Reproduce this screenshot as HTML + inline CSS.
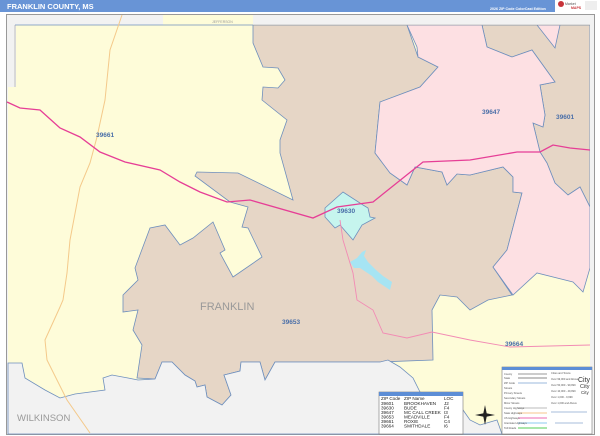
<!DOCTYPE html>
<html><head><meta charset="utf-8"><style>
html,body{margin:0;padding:0;background:#fff;width:600px;height:436px;overflow:hidden}
svg{display:block}
text{font-family:"Liberation Sans",sans-serif}
</style></head><body>
<svg width="600" height="436" viewBox="0 0 600 436" xmlns="http://www.w3.org/2000/svg">
<rect x="0" y="0" width="600" height="12" fill="#6894d6"/>
<text x="7" y="9" font-size="7.5" font-weight="bold" fill="#fff">FRANKLIN COUNTY, MS</text>
<text x="490" y="10" font-size="3.6" font-weight="bold" fill="#fff">2026 ZIP Code ColorCast Edition</text>
<rect x="555" y="0" width="45" height="12" fill="#fff"/>
<circle cx="561" cy="4" r="3" fill="#c8343a"/>
<text x="565" y="5" font-size="3.5" fill="#555">Market</text>
<text x="571" y="9" font-size="3.5" fill="#c8343a" font-weight="bold">MAPS</text>
<rect x="585" y="1" width="12" height="9" fill="#eee"/>
<rect x="6.5" y="14.5" width="588" height="420" fill="#f2f2f2" stroke="#999" stroke-width="1"/>
<rect x="8" y="87" width="582" height="346" fill="#fefcd9"/>
<rect x="16" y="25" width="574" height="62" fill="#fefcd9"/>
<!-- tan -->
<polygon fill="#e6d6c6" stroke="#6e8fbd" stroke-width="0.8" points="253,25 253,43 263,67 278,68 285,80 278,88 263,87 262,100 287,120 280,140 280,153 293,200 238,173 197,172 195,176 230,202 248,207 242,227 248,228 262,257 233,277 220,253 225,250 213,222 193,238 180,245 165,225 150,228 135,268 138,280 123,295 123,312 138,310 133,330 142,345 137,378 155,379 162,362 172,362 185,375 195,381 197,387 205,385 207,397 222,405 231,395 224,375 240,371 241,362 260,362 265,380 275,362 380,362 433,360 432,310 440,295 457,297 470,310 488,300 512,295 493,267 507,250 522,193 513,192 513,177 503,167 470,175 457,174 447,185 442,172 415,167 407,185 390,173 375,153 380,102 420,87 438,67 418,57 407,25"/>
<polygon fill="#e6d6c6" stroke="#6e8fbd" stroke-width="0.8" points="482,25 487,47 512,57 532,50 555,82 540,85 545,115 543,127 533,123 540,152 547,163 555,183 568,195 580,187 590,207 590,25"/>
<!-- pink -->
<polygon fill="#fde0e3" stroke="#6e8fbd" stroke-width="0.8" points="407,25 417,47 418,57 438,67 420,87 380,102 375,153 390,173 407,185 415,167 442,172 447,185 457,174 470,175 503,167 513,177 513,192 522,193 507,250 493,267 513,295 537,273 573,282 583,292 590,268 590,207 580,187 568,195 555,183 547,163 540,152 533,123 543,127 545,115 540,85 555,82 532,50 512,57 487,47 482,25"/>
<polygon fill="#fde0e3" stroke="#6e8fbd" stroke-width="0.8" points="537,25 555,48 560,25"/>
<!-- gray outside bottom -->
<polygon fill="#f2f2f2" stroke="#6e8fbd" stroke-width="0.8" points="8,363 22,363 25,378 45,390 60,398 75,394 105,390 103,378 112,375 128,378 138,380 155,379 162,362 172,362 185,375 195,381 197,387 205,385 207,397 222,405 231,395 224,375 240,371 241,362 260,362 265,380 275,362 380,362 388,360 400,367 413,378 420,392 463,410 470,420 480,425 497,420 502,434 8,434"/>
<rect x="16" y="15" width="147" height="10" fill="#f2f2f2"/>
<rect x="163" y="15" width="90" height="10" fill="#fefcd9"/>
<rect x="253" y="15" width="337" height="10" fill="#f2f2f2"/>
<rect x="8" y="15" width="7" height="72" fill="#f2f2f2"/>
<line x1="15" y1="25" x2="253" y2="25" stroke="#6e8fbd" stroke-width="0.8"/>
<line x1="253" y1="25" x2="590" y2="25" stroke="#999" stroke-width="0.6"/>
<line x1="15" y1="25" x2="15" y2="87" stroke="#999" stroke-width="0.6"/>
<rect x="590" y="15" width="4" height="419" fill="#f2f2f2"/>
<text x="212" y="23" font-size="3.5" fill="#999">JEFFERSON</text>
<polygon fill="#c6f5ee" stroke="#6e8fbd" stroke-width="0.8" points="325,208 343,192 363,205 368,208 370,217 375,218 362,225 353,240 340,225 335,228 325,217"/>
<polygon fill="#a6e4f3" points="350,262 357,258 362,252 366,250 364,256 368,262 376,270 383,276 392,282 390,290 384,286 378,282 372,276 366,272 360,268 354,268"/>
<polyline fill="none" stroke="#f4c98a" stroke-width="1" points="122,15 110,50 105,100 97,137 90,163 80,187 70,240 67,273 63,300 60,307 45,340 47,360 67,400 90,433"/>
<polyline fill="none" stroke="#f28bb4" stroke-width="0.9" points="340,220 343,240 353,273 357,300 373,310 383,333 407,338 432,332 470,340 510,347 590,345"/>
<polyline fill="none" stroke="#e63e96" stroke-width="1.3" points="7,102 20,108 40,110 60,128 80,137 100,152 125,162 160,170 180,182 200,192 227,202 250,200 313,218 337,207 373,202 423,162 470,160 517,152 540,152 553,145 570,148 590,150"/>
<g font-size="6.5" font-weight="bold" fill="#4a6fa8">
<text x="96" y="137">39661</text>
<text x="482" y="114">39647</text>
<text x="556" y="119">39601</text>
<text x="337" y="213">39630</text>
<text x="282" y="324">39653</text>
<text x="505" y="346">39664</text>
</g>
<text x="200" y="310" font-size="11" fill="#999">FRANKLIN</text>
<text x="17" y="421" font-size="9.5" fill="#999">WILKINSON</text>
<g fill="#222"><polygon points="485,405 487,415 485,425 483,415"/><polygon points="475,415 485,413 495,415 485,417"/></g>
<rect x="379" y="392" width="84" height="42" fill="#fff" stroke="#777" stroke-width="0.6"/>
<rect x="379" y="392" width="84" height="4" fill="#5d8ed6"/>
<g font-size="4.6" fill="#222">
<text x="381" y="400">ZIP Code</text><text x="404" y="400">ZIP Name</text><text x="444" y="400">LOC</text>
<text x="381" y="405">39601</text><text x="404" y="405">BROOKHAVEN</text><text x="444" y="405">J2</text>
<text x="381" y="409.5">39630</text><text x="404" y="409.5">BUDE</text><text x="444" y="409.5">F4</text>
<text x="381" y="414">39647</text><text x="404" y="414">MC CALL CREEK</text><text x="444" y="414">I3</text>
<text x="381" y="418.5">39653</text><text x="404" y="418.5">MEADVILLE</text><text x="444" y="418.5">F4</text>
<text x="381" y="423">39661</text><text x="404" y="423">ROXIE</text><text x="444" y="423">C4</text>
<text x="381" y="427.5">39664</text><text x="404" y="427.5">SMITHDALE</text><text x="444" y="427.5">I6</text>
</g>
<rect x="502" y="367" width="90" height="67" fill="#fff" stroke="#777" stroke-width="0.6"/>
<rect x="502" y="367" width="90" height="3" fill="#5d8ed6"/>
<g stroke-width="1">
<line x1="518" y1="374" x2="547" y2="374" stroke="#999"/>
<line x1="518" y1="378" x2="547" y2="378" stroke="#888"/>
<line x1="518" y1="383" x2="547" y2="383" stroke="#9bb8dd"/>
<line x1="518" y1="408" x2="547" y2="408" stroke="#bbb"/>
<line x1="518" y1="413" x2="547" y2="413" stroke="#f7c48c"/>
<line x1="518" y1="418" x2="547" y2="418" stroke="#ee68b0"/>
<line x1="518" y1="423" x2="547" y2="423" stroke="#8cc8ef"/>
<line x1="518" y1="428" x2="547" y2="428" stroke="#55cc55"/>
</g>
<g font-size="2.6" fill="#555">
<text x="504" y="375">County</text><text x="504" y="379">State</text><text x="504" y="384">ZIP Code</text><text x="504" y="389">Streets</text><text x="504" y="394">Primary Streets</text><text x="504" y="399">Secondary Streets</text><text x="504" y="404">Minor Streets</text><text x="504" y="409">County Highways</text><text x="504" y="414">State Highways</text><text x="504" y="419">US Highways</text><text x="504" y="424">Interstate Highways</text><text x="504" y="429">Toll Roads</text>
<text x="551" y="374">Cities and Towns</text><text x="551" y="380">Over 99,000 and Above</text><text x="551" y="386">Over 50,000 - 99,999</text><text x="551" y="392">Over 10,000 - 49,999</text><text x="551" y="398">Over 1,000 - 9,999</text><text x="551" y="404">Over 1,000 and Above</text>
</g>
<g fill="#333"><text x="578" y="382" font-size="7">City</text><text x="580" y="388" font-size="5.5">City</text><text x="581" y="394" font-size="4.5">City</text></g>
<line x1="551" y1="412" x2="587" y2="412" stroke="#8aa7cf" stroke-width="0.8"/>
<line x1="555" y1="423" x2="583" y2="423" stroke="#8aa7cf" stroke-width="0.8"/>
</svg>
</body></html>
